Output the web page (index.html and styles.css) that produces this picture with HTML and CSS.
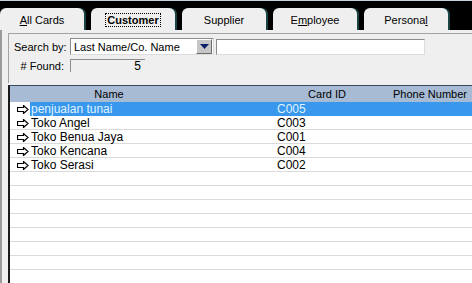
FILE: index.html
```html
<!DOCTYPE html>
<html lang="en">
<head>
    <meta charset="UTF-8">
    <title>Card File</title>
    <link rel="stylesheet" href="styles.css">
</head>
<body>
    <div class="tabbar">
        <div class="tab"><u>A</u>ll Cards</div>
        <div class="tab active"><span class="focus">Customer</span></div>
        <div class="tab">Supplier</div>
        <div class="tab">E<u>m</u>ployee</div>
        <div class="tab">Persona<u>l</u></div>
    </div>

    <div class="panel">
        <div class="search">
            <div class="search-row">
                <label class="lbl">Search by:</label>
                <div class="select">
                    <span>Last Name/Co. Name</span>
                    <span class="drop">
                        <svg width="9" height="5" viewBox="0 0 9 5"><polygon points="0,0 9,0 4.5,5" fill="#0a1f6b"/></svg>
                    </span>
                </div>
                <div class="textbox"></div>
            </div>
            <div class="search-row">
                <label class="lbl">#&nbsp;Found:</label>
                <div class="found">5</div>
            </div>
        </div>

        <div class="grid">
            <div class="grid-head">
                <span class="h-name">Name</span>
                <span class="h-card">Card ID</span>
                <span class="h-phone">Phone Number</span>
            </div>
            <div class="rows" id="rows"></div>
        </div>
    </div>

    <script>
        const cards = [
            { name: 'penjualan tunai', id: 'C005' },
            { name: 'Toko Angel', id: 'C003' },
            { name: 'Toko Benua Jaya', id: 'C001' },
            { name: 'Toko Kencana', id: 'C004' },
            { name: 'Toko Serasi', id: 'C002' }
        ];
        const arrow = '<svg width="12" height="9" viewBox="0 0 12 9"><path d="M0.5 2.5 H6.5 V0.5 L11 4.5 L6.5 8.5 V6.5 H0.5 Z" fill="#fff" stroke="#000" stroke-width="1.2"/></svg>';
        const rows = document.getElementById('rows');
        let html = '';
        cards.forEach((c, i) => {
            html += '<div class="row' + (i === 0 ? ' selected' : '') + '">' +
                '<span class="icon">' + arrow + '</span>' +
                '<span class="cell-name">' + c.name + '</span>' +
                '<span class="cell-id">' + c.id + '</span>' +
                '<span class="cell-phone"></span></div>';
        });
        for (let i = 0; i < 10; i++) {
            html += '<div class="row empty"></div>';
        }
        rows.innerHTML = html;
    </script>
</body>
</html>
```

FILE: styles.css
```css
body {
    margin: 0;
    font-family: "Liberation Sans", Arial, sans-serif;
    font-size: 11px;
    color: #000;
    background-color: #efefef;
    height: 283px;
    overflow: hidden;
}
.tabbar {
    display: flex;
    gap: 7px;
    height: 22px;
    padding-top: 7px;
    background-color: #000;
    border-top: 1px solid #c9d3dd;
}
.tab {
    width: 84px;
    height: 22px;
    line-height: 24px;
    text-align: center;
    background-color: #efefef;
    border-radius: 6px 6px 0 0;
    box-shadow: 2px 0 0 #1b4444;
}
.tab.active {
    font-weight: bold;
}
.tab .focus {
    outline: 1px dotted #000;
    padding: 0 1px;
}
.panel {
    border-left: 2px solid #9a9a9a;
    padding: 3px 0 0 6px;
    height: 254px;
}
.search {
    border-top: 1px solid #a3a3a3;
    border-left: 1px solid #a3a3a3;
    height: 45px;
    padding: 4px 0 0 5px;
    display: flex;
    flex-direction: column;
    gap: 4px;
}
.search-row {
    display: flex;
    align-items: center;
    gap: 6px;
}
.lbl {
    width: 50px;
    text-align: right;
    white-space: nowrap;
}
.select {
    width: 139px;
    height: 15px;
    background-color: #fff;
    border: 1px solid #8c8c8c;
    border-right-color: #dcdcdc;
    border-bottom-color: #dcdcdc;
    display: flex;
    align-items: center;
    justify-content: space-between;
    padding-left: 3px;
}
.drop {
    width: 14px;
    height: 13px;
    background-color: #c6c6c6;
    border: 1px solid #fff;
    border-right-color: #6e6e6e;
    border-bottom-color: #6e6e6e;
    display: flex;
    align-items: center;
    justify-content: center;
    margin-right: 1px;
}
.textbox {
    width: 207px;
    height: 14px;
    background-color: #fff;
    border: 1px solid #8c8c8c;
    border-right-color: #dcdcdc;
    border-bottom-color: #dcdcdc;
    margin-left: -4px;
}
.found {
    width: 70px;
    height: 12px;
    line-height: 12px;
    border-top: 1px solid #8c8c8c;
    border-left: 1px solid #8c8c8c;
    text-align: right;
    padding-right: 4px;
    font-size: 12px;
}
.grid {
    margin-top: 2px;
    border-left: 2px solid #1a1a1a;
    border-top: 1px solid #3a4a60;
    background-color: #fff;
    height: 200px;
    overflow: hidden;
}
.grid-head {
    display: flex;
    height: 16px;
    line-height: 16px;
    background-color: #a7bbd5;
}
.h-name {
    width: 198px;
    text-align: center;
}
.h-card {
    width: 138px;
    text-align: right;
}
.h-phone {
    flex: 1;
    text-align: right;
    padding-right: 5px;
}
.row {
    display: grid;
    grid-template-columns: 20px 247px 84px 1fr;
    height: 14px;
    line-height: 14px;
    border-bottom: 1px solid #dadada;
    box-sizing: border-box;
    font-size: 12px;
}
.row .icon {
    display: flex;
    align-items: center;
    justify-content: flex-end;
    padding-right: 1px;
}
.row .cell-name {
    padding-left: 1px;
}
.row.selected {
    border-bottom-color: #fff;
}
.row.selected .cell-name,
.row.selected .cell-id,
.row.selected .cell-phone {
    background-color: #3a97ee;
    color: #dff4ff;
}
```
